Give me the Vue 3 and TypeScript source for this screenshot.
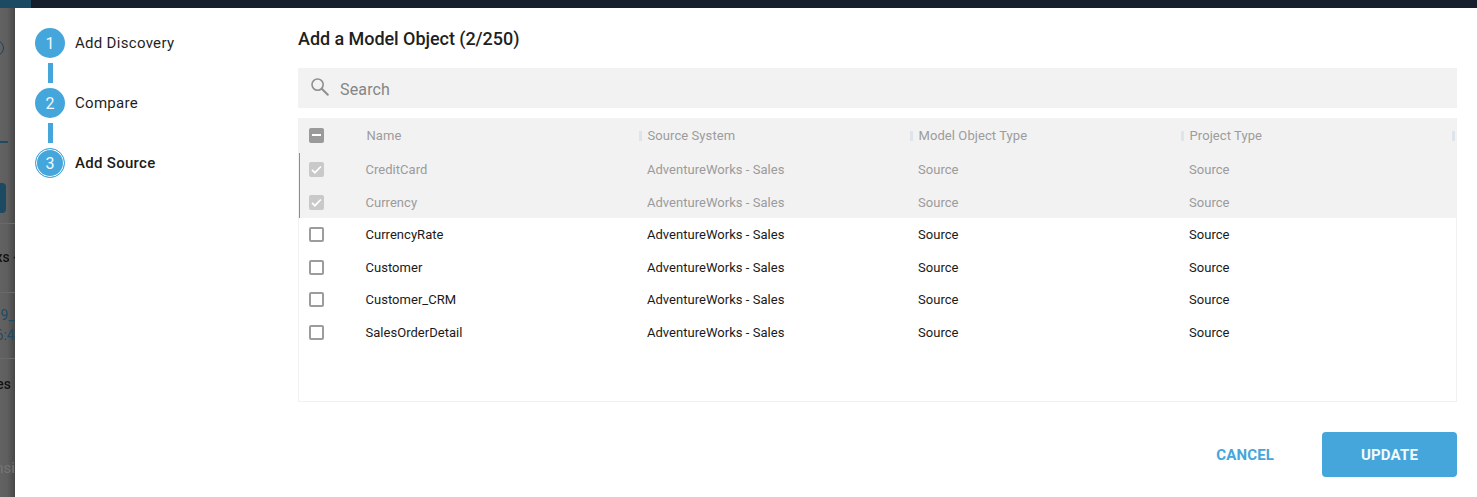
<script setup lang="ts">
interface Row { name: string; locked: boolean }
const columns: string[] = ['Name', 'Source System', 'Model Object Type', 'Project Type']
const rows: Row[] = [
  { name: 'CreditCard', locked: true },
  { name: 'Currency', locked: true },
  { name: 'CurrencyRate', locked: false },
  { name: 'Customer', locked: false },
  { name: 'Customer_CRM', locked: false },
  { name: 'SalesOrderDetail', locked: false },
]
const steps: string[] = ['Add Discovery', 'Compare', 'Add Source']
</script>

<template>
  <div class="page">
    <div class="topbar"><div class="topbar-accent"></div></div>
    <div class="body">
      <div class="backdrop" aria-hidden="true">
        <span class="bd-ring"></span>
        <span class="bd-line"></span>
        <span class="bd-btn"></span>
        <span class="bd-rule bd-r0"></span>
        <span class="bd-text bd-ks">xs -</span>
        <span class="bd-rule bd-r1"></span>
        <span class="bd-text bd-link bd-19">19_</span>
        <span class="bd-text bd-link bd-64">6:4</span>
        <span class="bd-rule bd-r2"></span>
        <span class="bd-text bd-es">es</span>
        <span class="bd-text bd-nsi">nsi</span>
      </div>
      <div class="modal">
        <aside class="stepper">
          <template v-for="(s, i) in steps" :key="s">
            <div class="step" :class="{ current: i === 2 }">
              <span class="dot"><span>{{ i + 1 }}</span></span>
              <span class="step-label">{{ s }}</span>
            </div>
            <div v-if="i < 2" class="connector"></div>
          </template>
        </aside>
        <main class="content">
          <h1 class="title">Add a Model Object (2/250)</h1>
          <div class="search">
            <svg class="search-icon" width="20" height="20" viewBox="0 0 20 20" fill="none" stroke="#8f8f8f" stroke-width="1.6">
              <circle cx="7.6" cy="7.6" r="5.6" />
              <path d="M11.8 11.8l6 6" stroke-linecap="round" stroke-width="2" />
            </svg>
            <span class="search-text">Search</span>
          </div>
          <div class="table">
            <div class="grid head">
              <div class="check-cell">
                <span class="box mixed"><span class="dash"></span></span>
              </div>
              <div v-for="c in columns" :key="c" class="th">{{ c }}</div>
            </div>
            <div v-for="r in rows" :key="r.name" class="grid row" :class="{ locked: r.locked }">
              <div class="check-cell">
                <span v-if="r.locked" class="box checked">
                  <svg width="15" height="15" viewBox="0 0 16 16" fill="none" stroke="#fff" stroke-width="1.8">
                    <path d="M3.2 8.3l3.1 3.1 6.4-6.6" />
                  </svg>
                </span>
                <span v-else class="box empty"></span>
              </div>
              <div class="td td-name">{{ r.name }}</div>
              <div class="td">AdventureWorks - Sales</div>
              <div class="td">Source</div>
              <div class="td">Source</div>
            </div>
          </div>
          <div class="actions">
            <button class="btn-cancel" type="button">CANCEL</button>
            <button class="btn-update" type="button">UPDATE</button>
          </div>
        </main>
      </div>
    </div>
  </div>
</template>

<style>
html, body { margin: 0; padding: 0; background: #fff; overflow: hidden; }
</style>

<style scoped>
.page {
  width: 1477px;
  height: 497px;
  display: flex;
  flex-direction: column;
  overflow: hidden;
  font-family: Roboto, "Liberation Sans", sans-serif;
}
.topbar { height: 8px; background: #16202c; flex: none; }
.topbar-accent { width: 31px; height: 8px; background: #1c4a63; }
.body { flex: 1; display: flex; min-height: 0; }

.backdrop {
  position: relative;
  width: 15px;
  flex: none;
  overflow: hidden;
  background: linear-gradient(90deg, #626262 0%, #5e5e5e 50%, #464646 100%);
}
.bd-ring {
  position: absolute; left: -12px; top: 32px;
  width: 14px; height: 14px;
  border: 1.5px solid #1f4257; border-radius: 50%;
  filter: blur(0.3px);
}
.bd-line { position: absolute; left: 0; top: 133px; width: 8px; height: 2px; background: #1f4a63; }
.bd-btn { position: absolute; left: -10px; top: 175px; width: 16px; height: 30px; border-radius: 4px; background: #1b4a62; }
.bd-rule { position: absolute; left: 0; width: 15px; height: 1px; background: #696969; }
.bd-r0 { top: 215px; }
.bd-r1 { top: 284px; }
.bd-r2 { top: 350px; }
.bd-text {
  position: absolute; right: 0; font-size: 14px; line-height: 18px; white-space: nowrap;
  color: #111; filter: blur(0.4px);
}
.bd-ks { top: 240px; right: -3px; font-weight: 500; }
.bd-link { color: #1f4a63; }
.bd-19 { top: 298px; right: 0; }
.bd-64 { top: 318px; right: 0; }
.bd-es { top: 367px; right: 4px; font-weight: 500; }
.bd-nsi { top: 451px; right: 0; color: #757575; font-size: 15px; }

.modal { flex: 1; background: #fff; display: flex; min-width: 0; }

.stepper { width: 283px; flex: none; padding: 20px 0 0 20px; box-sizing: border-box; }
.step { display: flex; align-items: center; height: 30px; }
.dot {
  width: 30px; height: 30px; border-radius: 50%;
  background: #44a6da; color: #f1f8fc;
  display: flex; align-items: center; justify-content: center;
  font-size: 16px; flex: none; box-sizing: border-box;
}
.step.current .dot { border: 1px solid #44a6da; box-shadow: inset 0 0 0 1px #fff; }
.step-label {
  margin-left: 10px; font-size: 15px; letter-spacing: 0.3px; color: #1f1f1f;
}
.step.current .step-label { font-weight: 500; color: #1b1b1b; }
.connector { width: 5px; height: 20px; margin: 5px 0 5px 13px; background: #44a6da; }

.content { width: 1159px; flex: none; display: flex; flex-direction: column; }
.title {
  margin: 20px 0 0; font-size: 18px; line-height: 22px; font-weight: 500; color: #1f1f1f;
  letter-spacing: -0.05px;
}
.search {
  margin-top: 18px; height: 40px; background: #f2f2f2;
  display: flex; align-items: center; padding-left: 12px; box-sizing: border-box;
}
.search-icon { flex: none; margin-top: -2px; }
.search-text { margin-left: 10px; font-size: 16px; color: #858585; letter-spacing: 0.15px; padding-top: 2px; }

.table {
  margin-top: 10px; height: 284px; box-sizing: border-box;
  border: 1px solid #f1f1f1; border-top: 0;
}
.grid {
  display: grid;
  grid-template-columns: 67px 281px 271px 271px 271px;
  align-items: center;
}
.head { height: 35.25px; background: #f2f2f2; }
.row { height: 32.5px; font-size: 13px; }
.row.locked { background: #f2f2f2; color: #9b9b9b; position: relative; }
.row.locked::before {
  content: ""; position: absolute; left: 0; top: 0; bottom: 0; width: 1px; background: #4aa3d6;
}
.th {
  position: relative; font-size: 13px; color: #9c9c9c; padding-left: 0.5px; letter-spacing: 0.08px;
}
.th::after {
  content: ""; position: absolute; right: 5px; top: 3px; width: 3px; height: 10px; background: #dfe3ea;
}
.td { color: #1a1a1a; font-size: 13px; letter-spacing: 0.03px; }
.td-name { margin-left: -0.5px; }
.row.locked .td { color: #9b9b9b; }
.check-cell { padding-left: 10px; display: flex; align-items: center; }
.box {
  width: 15px; height: 15px; box-sizing: border-box; border-radius: 2px;
  display: flex; align-items: center; justify-content: center; flex: none;
}
.mixed { background: #9a9a9a; margin-top: -1px; }
.dash { width: 9px; height: 2px; background: #fff; }
.checked { background: #c9c9c9; }
.empty { border: 2px solid #9c9c9c; background: #fff; }

.actions {
  margin-top: 30px; display: flex; justify-content: flex-end; align-items: center;
}
button { font-family: inherit; cursor: pointer; border: 0; }
.btn-cancel {
  background: none; color: #44a6da; font-size: 15px; font-weight: 700; letter-spacing: 0.15px;
  margin-right: 48px; padding: 0;
}
.btn-update {
  width: 135px; height: 45px; border-radius: 4px; background: #44a6da; color: #f4fafd;
  font-size: 15px; font-weight: 700; letter-spacing: 0.15px;
}
</style>
